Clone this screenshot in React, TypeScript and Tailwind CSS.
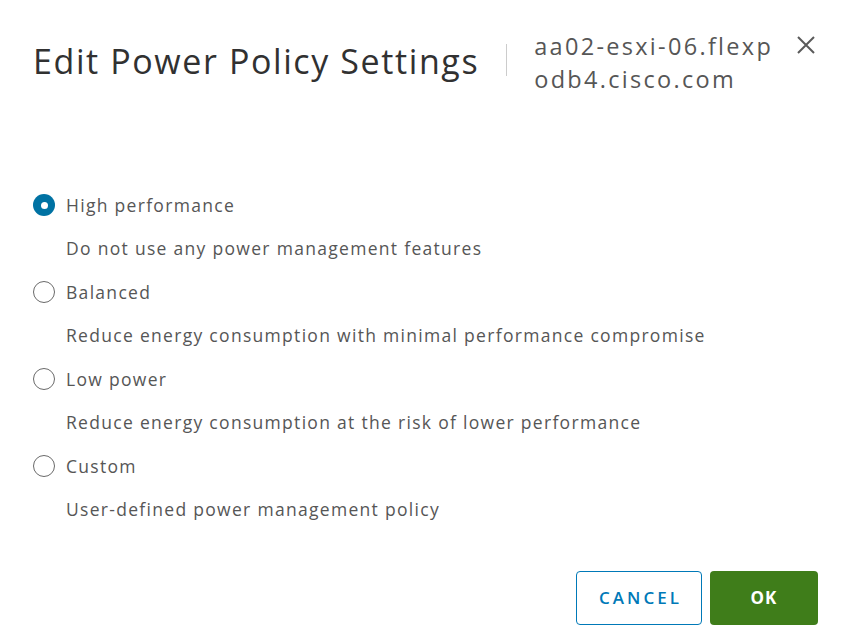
import { useState } from "react";

const options = [
  { id: "high", label: "High performance", desc: "Do not use any power management features" },
  { id: "balanced", label: "Balanced", desc: "Reduce energy consumption with minimal performance compromise" },
  { id: "low", label: "Low power", desc: "Reduce energy consumption at the risk of lower performance" },
  { id: "custom", label: "Custom", desc: "User-defined power management policy" },
];

export default function App() {
  const [selected, setSelected] = useState("high");

  return (
    <div className="w-[842px] h-[641px] bg-white text-[#565656] font-['Open_Sans',sans-serif] flex flex-col">
      <header className="flex items-start pl-[33px] pr-[26px] pt-[30px]">
        <h1 className="text-[34px] leading-[44px] text-[#313131] tracking-[1.6px] mt-[9px] whitespace-nowrap">Edit Power Policy Settings</h1>
        <div className="w-px h-[32px] bg-[#cccccc] ml-[27px] mt-[14px] shrink-0" />
        <div className="ml-[27px] text-[23.5px] leading-[33px] tracking-[2.3px] text-[#565656] whitespace-nowrap">
          aa02-esxi-06.flexp
          <br />
          odb4.cisco.com
        </div>
        <button className="ml-auto mt-[5px] text-[#5a5a5a]">
          <svg width="20" height="20" viewBox="0 0 20 20" stroke="currentColor" strokeWidth="2" fill="none">
            <path d="M2 2 L18 18 M18 2 L2 18" />
          </svg>
        </button>
      </header>

      <div className="flex flex-col pl-[33px] pt-[98px]">
        {options.map((o) => (
          <div key={o.id} className="flex flex-col h-[87px]">
            <label className="flex items-center h-[22px] cursor-pointer" onClick={() => setSelected(o.id)}>
              {selected === o.id ? (
                <span className="w-[22px] h-[22px] rounded-full bg-[#0072a3] flex items-center justify-center">
                  <span className="w-[7px] h-[7px] rounded-full bg-white" />
                </span>
              ) : (
                <span className="w-[22px] h-[22px] rounded-full border-[1.5px] border-[#6a6a6a]" />
              )}
              <span className="ml-[11px] text-[17.5px] tracking-[1.3px]">{o.label}</span>
            </label>
            <p className="ml-[33px] mt-[21px] text-[17.5px] leading-[22px] tracking-[1.3px]">{o.desc}</p>
          </div>
        ))}
      </div>

      <footer className="flex justify-end gap-[8px] pr-[24px] mt-auto mb-[16px]">
        <button className="w-[126px] h-[54px] rounded-[4px] border-[1.5px] border-[#0079b8] text-[#0079b8] text-[17px] font-semibold tracking-[3px] pl-[3px]">
          CANCEL
        </button>
        <button className="w-[108px] h-[54px] rounded-[4px] bg-[#3f7d1a] text-white text-[17px] font-bold tracking-[1px]">
          OK
        </button>
      </footer>
    </div>
  );
}
